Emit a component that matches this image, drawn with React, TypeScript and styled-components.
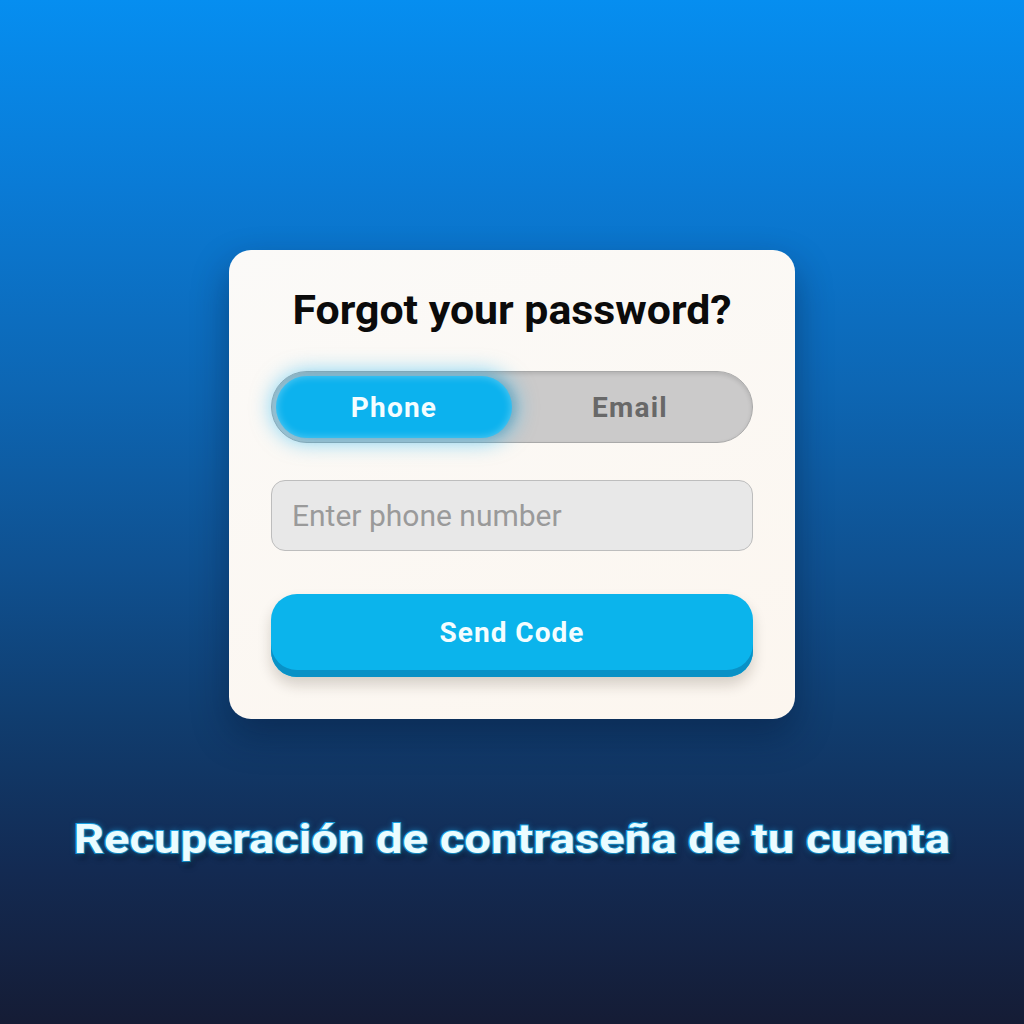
import React from "react";
import styled, { createGlobalStyle } from "styled-components";

const Global = createGlobalStyle`
  html, body { margin: 0; padding: 0; }
  body { font-family: Roboto, "Liberation Sans", sans-serif; }
`;

const Page = styled.div`
  width: 1024px;
  height: 1024px;
  box-sizing: border-box;
  padding-top: 250px;
  display: flex;
  flex-direction: column;
  align-items: center;
  background: linear-gradient(
    180deg,
    #068ef0 0%,
    #0a7bd6 18%,
    #0d66b3 38%,
    #0f5191 55%,
    #103d6f 70%,
    #132a52 85%,
    #151c35 100%
  );
  overflow: hidden;
`;

const Card = styled.div`
  width: 566px;
  box-sizing: border-box;
  padding: 38px 42px 42px;
  border-radius: 22px;
  background: linear-gradient(160deg, #fbfaf8 0%, #fcf6ef 100%);
  box-shadow: 0 16px 36px rgba(5, 20, 50, 0.4);
  display: flex;
  flex-direction: column;
`;

const Title = styled.h1`
  margin: 0;
  font-size: 40px;
  line-height: 46px;
  font-weight: 700;
  color: #0b0b0b;
  text-align: center;
  transform: scaleX(1.07);
`;

const Toggle = styled.div`
  margin-top: 37px;
  height: 72px;
  box-sizing: border-box;
  border-radius: 36px;
  background: #cbcaca;
  border: 1.5px solid #a9a9a9;
  box-shadow: inset 0 2px 4px rgba(0, 0, 0, 0.12);
  display: grid;
  grid-template-columns: 236px 1fr;
  align-items: center;
  padding: 4px;
`;

const Segment = styled.div<{ $active?: boolean }>`
  height: 62px;
  border-radius: 31px;
  display: flex;
  align-items: center;
  justify-content: center;
  font-size: 28px;
  letter-spacing: 1.2px;
  font-weight: 700;
  color: ${(p) => (p.$active ? "#f4fdff" : "#686868")};
  background: ${(p) => (p.$active ? "#0cb2ee" : "transparent")};
  box-shadow: ${(p) =>
    p.$active
      ? "0 0 20px 5px rgba(20, 180, 245, 0.5), inset 0 0 8px rgba(255,255,255,0.35), 4px 0 8px rgba(0,0,0,0.15)"
      : "none"};
`;

const Input = styled.input`
  margin-top: 37px;
  height: 71px;
  box-sizing: border-box;
  border-radius: 14px;
  border: 1.5px solid #bdbdbd;
  background: #e8e8e8;
  padding: 0 20px;
  font-family: Roboto, "Liberation Sans", sans-serif;
  font-size: 30px;
  color: #333;
  outline: none;
  &::placeholder {
    color: #9a9a9a;
  }
`;

const Button = styled.button`
  margin-top: 43px;
  height: 83px;
  box-sizing: border-box;
  padding-bottom: 7px;
  border: none;
  border-radius: 26px;
  background: #0bb4ec;
  box-shadow: inset 0 -7px 0 #0991c6, 0 8px 14px rgba(40, 30, 10, 0.18);
  font-family: Roboto, "Liberation Sans", sans-serif;
  font-size: 28px;
  letter-spacing: 1px;
  font-weight: 700;
  color: #f4fdff;
  cursor: pointer;
`;

const Caption = styled.div`
  margin-top: 95px;
  font-size: 41px;
  line-height: 50px;
  font-weight: 700;
  color: #eafcff;
  -webkit-text-stroke: 2px #1aa2e2;
  paint-order: stroke fill;
  text-shadow: 0 0 6px rgba(30, 170, 240, 0.7), 2px 5px 6px rgba(0, 0, 0, 0.45);
  white-space: nowrap;
  transform: scaleX(1.15);
`;

export default function App() {
  return (
    <>
      <Global />
      <Page>
        <Card>
          <Title>Forgot your password?</Title>
          <Toggle>
            <Segment $active>Phone</Segment>
            <Segment>Email</Segment>
          </Toggle>
          <Input placeholder="Enter phone number" />
          <Button>Send Code</Button>
        </Card>
        <Caption>Recuperación de contraseña de tu cuenta</Caption>
      </Page>
    </>
  );
}
